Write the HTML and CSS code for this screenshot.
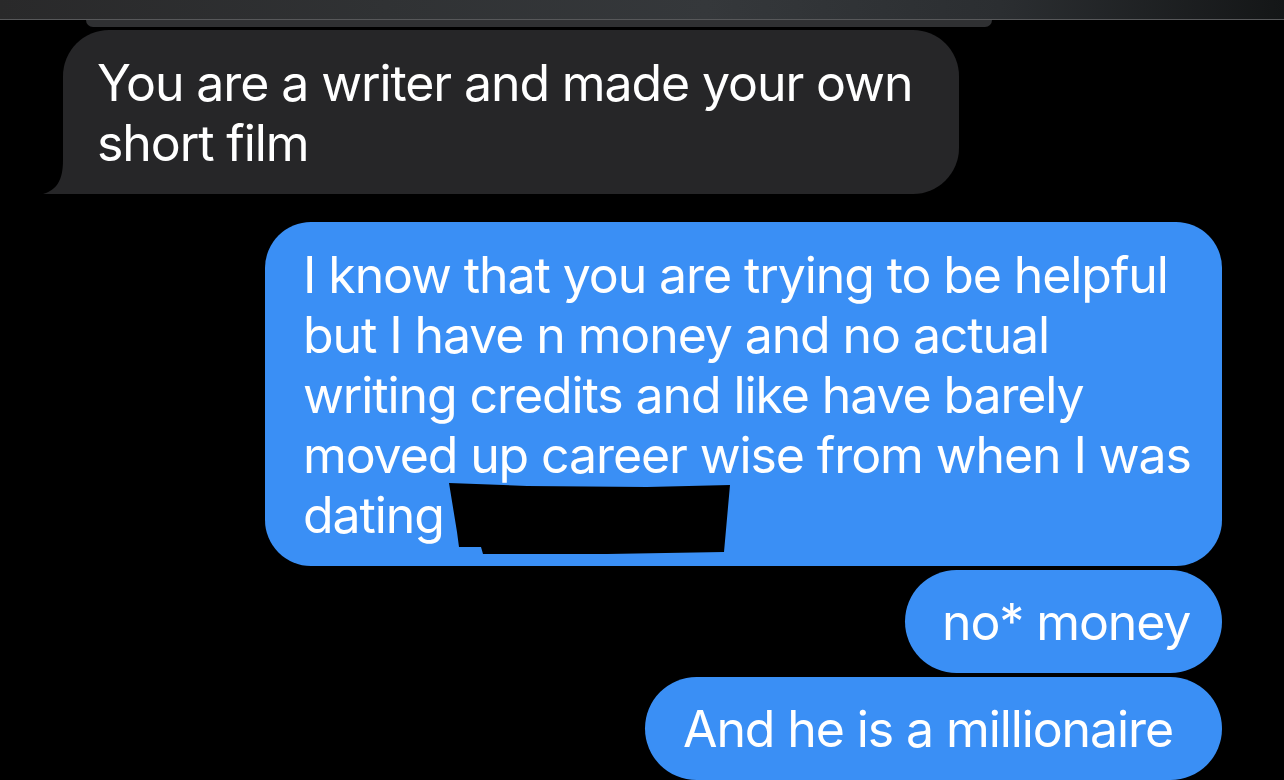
FILE: index.html
```html
<!DOCTYPE html>
<html lang="en">
<head>
    <meta charset="UTF-8">
    <meta name="viewport" content="width=device-width, initial-scale=1.0">
    <title>Messages</title>
    <link rel="stylesheet" href="styles.css">
</head>
<body>

    <div class="topbar"></div>

    <div class="thread">
        <div class="peek"></div>

        <div class="row">
            <div class="bubble in grey-main">
                You are a writer and made your own<br>short film
                <svg class="tail" width="22" height="34" viewBox="0 0 22 34">
                    <path d="M20 0 C20 20 14 30 0 34 L22 34 L22 0 Z" fill="#262628"/>
                </svg>
            </div>
        </div>

        <div class="row out-row gap-big">
            <div class="bubble out long">
                I know that you are trying to be helpful<br>
                but I have n money and no actual<br>
                writing credits and like have barely<br>
                moved up career wise from when I was<br>
                dating
                <svg class="redact" width="290" height="75" viewBox="0 0 290 75">
                    <polygon points="2,1 80,4 200,5 283,3 277,70 160,72 36,72 34,65 12,65 10,50" fill="#000"/>
                </svg>
            </div>
        </div>

        <div class="row out-row">
            <div class="bubble out pill short">no* money</div>
        </div>

        <div class="row out-row">
            <div class="bubble out pill last">And he is a millionaire</div>
        </div>
    </div>

</body>
</html>
```

FILE: styles.css
```css
body {
    margin: 0;
    width: 1284px;
    height: 780px;
    overflow: hidden;
    background: #000;
    font-family: Inter, "Noto Sans", sans-serif;
    color: #fff;
}
.topbar {
    height: 19px;
    background: linear-gradient(90deg, #29292a 0%, #303234 30%, #35383b 55%, #2b2e31 78%, #141617 100%);
    border-bottom: 1px solid #57585a;
}
.thread {
    display: flex;
    flex-direction: column;
}
.peek {
    margin-left: 86px;
    width: 906px;
    height: 7px;
    background: #2f3032;
    border-radius: 0 0 18px 18px;
}
.row {
    display: flex;
    padding: 0 62px 0 63px;
    margin-top: 4px;
}
.out-row {
    justify-content: flex-end;
}
.gap-big {
    margin-top: 28px;
}
.bubble {
    position: relative;
    box-sizing: border-box;
    font-size: 50px;
    line-height: 60px;
    white-space: nowrap;
    letter-spacing: -1.1px;
    border-radius: 46px;
}
.in {
    background: #262628;
    border-bottom-left-radius: 0;
}
.grey-main {
    width: 896px;
    height: 164px;
    padding: 23px 20px 21px 34px;
    margin-top: -1px;
}
.tail {
    position: absolute;
    left: -20px;
    bottom: 0;
}
.out {
    background: #3a8ff5;
}
.long {
    width: 957px;
    height: 344px;
    padding: 23px 20px 21px 38px;
}
.redact {
    position: absolute;
    left: 182px;
    top: 260px;
}
.pill {
    height: 103px;
    padding: 22px 0 21px 37px;
    border-radius: 52px;
}
.short {
    width: 317px;
}
.last {
    width: 577px;
    padding-left: 38px;
}
```
